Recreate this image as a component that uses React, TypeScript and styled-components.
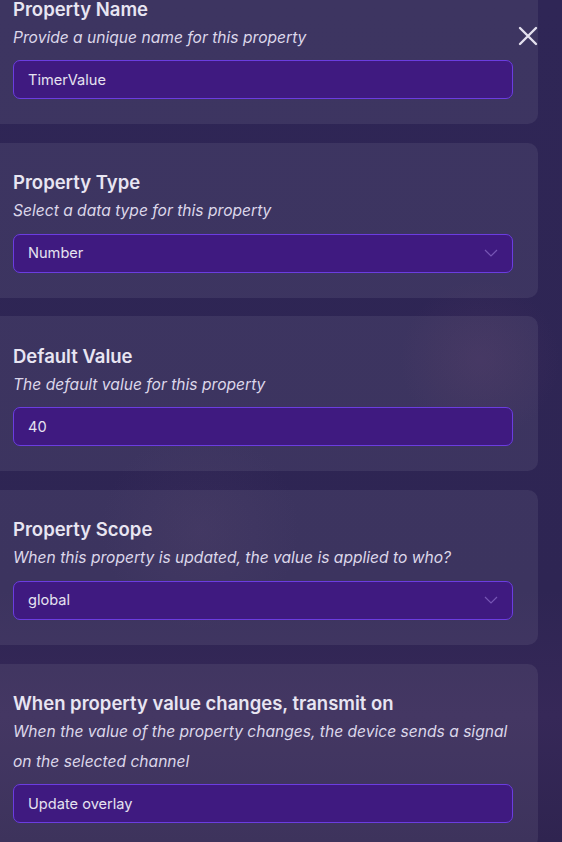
import { createGlobalStyle, styled } from "styled-components";

const GlobalStyle = createGlobalStyle`
    body {
        margin: 0;
        background: #2f2656;
        font-family: Inter, "Noto Sans", sans-serif;
        color: #e6e2f0;
        overflow: hidden;
    }
`

const Page = styled.div`
    position: relative;
    height: 842px;
    overflow: hidden;
    background:
        radial-gradient(circle at 480px 360px, rgba(120, 70, 120, 0.14) 0, rgba(120, 70, 120, 0) 80px),
        radial-gradient(circle at 200px 530px, rgba(110, 80, 130, 0.1) 0, rgba(110, 80, 130, 0) 100px),
        linear-gradient(180deg, #2f2656 0%, #2e2553 70%, #362858 85%, #2f2450 100%);
`

const List = styled.div`
    display: flex;
    flex-direction: column;
    gap: 18.67px;
    width: 558px;
    margin-top: -31px;
    margin-left: -20px;
`

const Card = styled.section`
    background: rgba(255, 255, 255, 0.07);
    border-radius: 10px;
    padding: 26.5px 25px 25px 33px;
`

const Title = styled.h3`
    margin: 0;
    font-size: 18.5px;
    line-height: 27px;
    font-weight: 600;
    color: #e8e5f2;
`

const Hint = styled.p`
    margin: 0;
    font-size: 15.6px;
    line-height: 29.5px;
    font-style: italic;
    color: #dcd7ea;
`

const Field = styled.div`
    box-sizing: border-box;
    margin-top: 8px;
    height: 39px;
    display: flex;
    align-items: center;
    justify-content: space-between;
    padding: 0 14px;
    background: #3f1a80;
    border: 1px solid #6b3de0;
    border-radius: 7px;
    font-size: 14.6px;
    color: #e6e2f0;
`

const Chevron = styled.svg`
    width: 14px;
    height: 8px;
    flex: none;
`

const CloseButton = styled.button`
    position: absolute;
    top: 26px;
    left: 518px;
    width: 20px;
    height: 20px;
    padding: 0;
    border: 0;
    background: none;
    cursor: pointer;
`

interface IField {
    title: string
    hint: React.ReactNode
    value: string
    select?: boolean
}

const fields: IField[] = [
    { title: "Property Name", hint: "Provide a unique name for this property", value: "TimerValue" },
    { title: "Property Type", hint: "Select a data type for this property", value: "Number", select: true },
    { title: "Default Value", hint: "The default value for this property", value: "40" },
    { title: "Property Scope", hint: "When this property is updated, the value is applied to who?", value: "global", select: true },
    {
        title: "When property value changes, transmit on",
        hint: <>When the value of the property changes, the device sends a signal<br />on the selected channel</>,
        value: "Update overlay",
    },
]

export default function App() {
    return (
        <Page>
            <GlobalStyle />
            <List>
                {fields.map((f) => (
                    <Card key={f.title}>
                        <Title>{f.title}</Title>
                        <Hint>{f.hint}</Hint>
                        <Field>
                            <span>{f.value}</span>
                            {f.select ? (
                                <Chevron viewBox="0 0 14 8">
                                    <path d="M1 1 L7 7 L13 1" fill="none" stroke="#7656b4" strokeWidth="1.2" />
                                </Chevron>
                            ) : null}
                        </Field>
                    </Card>
                ))}
            </List>
            <CloseButton aria-label="Close">
                <svg viewBox="0 0 20 20" width="20" height="20">
                    <path d="M2 2 L18 18 M18 2 L2 18" stroke="#e4e0ee" strokeWidth="2.4" strokeLinecap="round" />
                </svg>
            </CloseButton>
        </Page>
    )
}
